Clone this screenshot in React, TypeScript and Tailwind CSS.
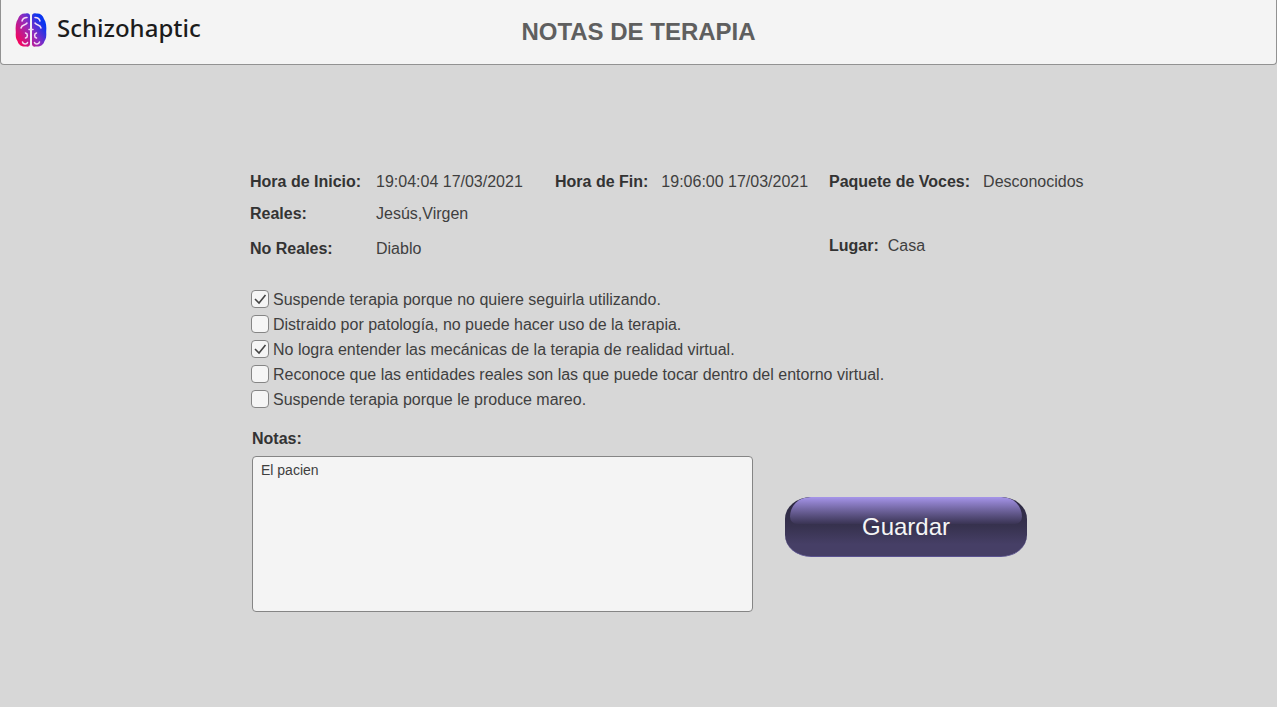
import { useState } from "react";

const observations = [
  { text: "Suspende terapia porque no quiere seguirla utilizando.", checked: true },
  { text: "Distraido por patología, no puede hacer uso de la terapia.", checked: false },
  { text: "No logra entender las mecánicas de la terapia de realidad virtual.", checked: true },
  { text: "Reconoce que las entidades reales son las que puede tocar dentro del entorno virtual.", checked: false },
  { text: "Suspende terapia porque le produce mareo.", checked: false },
];

function BrainLogo() {
  return (
    <svg viewBox="0 0 32 36" className="h-9 w-8 shrink-0" aria-hidden="true">
      <defs>
        <linearGradient id="brain" x1="0" y1="0.85" x2="1" y2="0.15">
          <stop offset="0.05" stopColor="#f5055c" />
          <stop offset="0.5" stopColor="#8f2cbf" />
          <stop offset="0.85" stopColor="#0a35f0" />
        </linearGradient>
      </defs>
      <path
        fill="url(#brain)"
        d="M11 1.500C13.500 1 15 2 15 4V32C15 34 13.500 35 11 34.500C7 35 3.500 33 2.500 29C.8 27 .5 24 .8 20C.3 15 .8 10 3 7C4 3 7 1 11 1.500ZM21 1.500C18.500 1 17 2 17 4V32C17 34 18.500 35 21 34.500C25 35 28.500 33 29.500 29C31.200 27 31.500 24 31.200 20C31.700 15 31.200 10 29 7C28 3 25 1 21 1.500Z"
      />
      <g fill="none" stroke="#f4dcf5" strokeWidth="1.500" strokeLinecap="round">
        <path d="M7 9C7.500 7 9 5.500 12 5.500M25 9C24.500 7 23 5.500 20 5.500" />
        <path d="M6 16C7 12 10 14 12 11M26 16C25 12 22 14 20 11" />
        <path d="M10.500 21C13 21.500 13 25.500 10.500 26M21.500 21C19 21.500 19 25.500 21.500 26" />
        <path d="M7.500 30C8 32.500 12 32.500 12.500 30.500M24.500 30C24 32.500 20 32.500 19.500 30.500" />
        <path d="M14 17.500H18" />
      </g>
    </svg>
  );
}

function Observation({ text, initial }: { text: string; initial: boolean }) {
  const [checked, setChecked] = useState(initial);
  return (
    <label className="flex h-[25px] items-center gap-1 whitespace-nowrap">
      <span className="grid shrink-0">
        <input
          type="checkbox"
          checked={checked}
          onChange={(e) => setChecked(e.target.checked)}
          className="peer col-start-1 row-start-1 size-[18px] appearance-none rounded-[4px] border border-[#858585] bg-[#f5f5f5]"
        />
        <svg
          viewBox="0 0 18 18"
          className="pointer-events-none invisible col-start-1 row-start-1 size-[18px] peer-checked:visible"
          aria-hidden="true"
        >
          <path d="M4 9L8 13L14.500 5" fill="none" stroke="#444" strokeWidth="1.600" />
        </svg>
      </span>
      <span className="pt-[2px]">{text}</span>
    </label>
  );
}

export default function App() {
  const [notes, setNotes] = useState("El pacien");
  return (
    <div className="min-h-screen bg-[#d7d7d7] font-['Liberation_Sans',Arial,sans-serif] text-[16px] leading-5 text-[#3f3f3f]">
      <header className="grid h-[65px] grid-cols-[1fr_auto_1fr] items-center rounded-b-[4px] border border-t-0 border-[#929292] bg-[#f4f4f4] px-[14px]">
        <div className="flex items-center gap-[10px] pb-1 font-['Noto_Sans',sans-serif] text-[24px] leading-8 font-medium text-[#1c1c1c]">
          <BrainLogo />
          <span className="pb-1">Schizohaptic</span>
        </div>
        <h1 className="text-[24px] font-bold text-[#5f5f5f]">NOTAS DE TERAPIA</h1>
      </header>

      <main className="mx-auto max-w-[777px] pt-[107px]">
        <dl className="grid grid-cols-[126px_179px_274px_auto] gap-y-3 whitespace-nowrap">
          <dt className="font-bold text-[#333]">Hora de Inicio:</dt>
          <dd>19:04:04 17/03/2021</dd>
          <div className="flex gap-[13px]">
            <dt className="font-bold text-[#333]">Hora de Fin:</dt>
            <dd>19:06:00 17/03/2021</dd>
          </div>
          <div className="flex gap-[13px]">
            <dt className="font-bold text-[#333]">Paquete de Voces:</dt>
            <dd>Desconocidos</dd>
          </div>
          <dt className="font-bold text-[#333]">Reales:</dt>
          <dd className="col-span-3">Jesús,Virgen</dd>
          <dt className="pt-[3px] font-bold text-[#333]">No Reales:</dt>
          <dd className="col-span-2 pt-[3px]">Diablo</dd>
          <div className="flex gap-[9px]">
            <dt className="font-bold text-[#333]">Lugar:</dt>
            <dd>Casa</dd>
          </div>
        </dl>

        <div className="mt-[27px] pl-px">
          {observations.map((item) => (
            <Observation key={item.text} text={item.text} initial={item.checked} />
          ))}
        </div>

        <div className="mt-[18px] flex items-end gap-8 pl-[2px]">
          <div className="flex min-w-0 flex-1 flex-col gap-[7px]">
            <label htmlFor="notes" className="font-bold text-[#333]">
              Notas:
            </label>
            <textarea
              id="notes"
              value={notes}
              onChange={(e) => setNotes(e.target.value)}
              className="h-[156px] w-full resize-none rounded-[4px] border border-[#858585] bg-[#f4f4f4] px-2 py-[3px] text-[14px] leading-5 outline-none"
            />
          </div>
          <button
            type="button"
            className="relative mb-[55px] h-[60px] w-[242px] shrink-0 overflow-hidden rounded-[26px/22px] border-b border-[#5b5391] bg-linear-to-b from-[#2b2740] from-0% via-[#37324f] via-50% to-[#463f66] to-80% text-[24px] text-[#f5f5f5]"
          >
            <span className="absolute inset-x-[5px] top-0 h-[27px] rounded-t-[22px] rounded-b-[8px] bg-linear-to-b from-[#a695ea] to-[#3a3454]" />
            <span className="relative">Guardar</span>
          </button>
        </div>
      </main>
    </div>
  );
}
